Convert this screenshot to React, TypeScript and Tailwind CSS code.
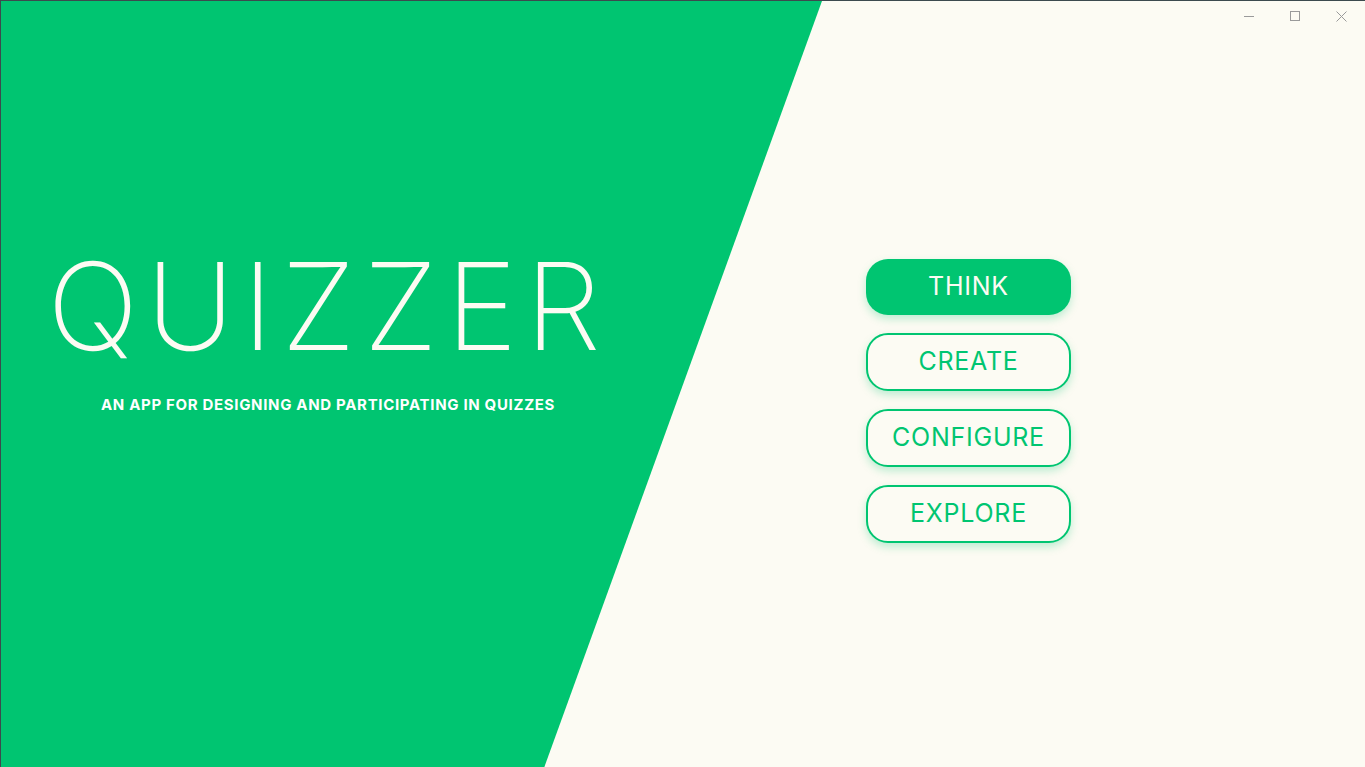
import React from 'react';

const buttons = ['THINK', 'CREATE', 'CONFIGURE', 'EXPLORE'];

export default function App() {
  return (
    <div className="relative w-[1365px] h-[767px] overflow-hidden bg-[#fcfbf3] border-t border-l border-[#3c4a4e] font-['Inter','Liberation_Sans',sans-serif]">
      {/* slanted green panel */}
      <div className="absolute inset-0 bg-[#00c571] [clip-path:polygon(0_0,821px_0,543px_767px,0_767px)]" />

      {/* window controls */}
      <div className="absolute top-0 right-0 flex items-center h-[30px] pr-[1px] text-[#9a9a9a]">
        <div className="w-[46px] flex justify-center">
          <svg width="10" height="10" viewBox="0 0 10 10"><path d="M0 5.5h10" stroke="currentColor" strokeWidth="1" /></svg>
        </div>
        <div className="w-[46px] flex justify-center">
          <svg width="10" height="10" viewBox="0 0 10 10"><rect x="0.5" y="0.5" width="9" height="9" fill="none" stroke="currentColor" strokeWidth="1" /></svg>
        </div>
        <div className="w-[46px] flex justify-center">
          <svg width="11" height="11" viewBox="0 0 11 11"><path d="M0.5 0.5l10 10M10.5 0.5l-10 10" stroke="currentColor" strokeWidth="1" /></svg>
        </div>
      </div>

      <div className="relative flex h-full">
        {/* title block */}
        <div className="w-[654px] flex flex-col items-center pt-[245px]">
          <h1 className="text-[121px] leading-none font-extralight tracking-[0.066em] text-[#fcfbf3]">QUIZZER</h1>
          <p className="mt-[27px] text-[15px] font-bold tracking-[0.045em] text-white">AN APP FOR DESIGNING AND PARTICIPATING IN QUIZZES</p>
        </div>

        {/* menu */}
        <div className="ml-[211px] pt-[258px] flex flex-col gap-[18px]">
          {buttons.map((label, i) => (
            <button
              key={label}
              className={
                i === 0
                  ? 'w-[205px] h-[56px] rounded-[22px] bg-[#00c571] text-[#fcfbf3] text-[25px] tracking-[0.03em] font-normal shadow-[0_4px_8px_rgba(0,197,113,0.25)]'
                  : 'w-[205px] h-[58px] rounded-[22px] border-2 border-[#00c571] bg-[#fcfbf3] text-[#00c571] text-[25px] tracking-[0.03em] font-normal shadow-[0_4px_8px_rgba(0,197,113,0.25)]'
              }
            >
              {label}
            </button>
          ))}
        </div>
      </div>
    </div>
  );
}
